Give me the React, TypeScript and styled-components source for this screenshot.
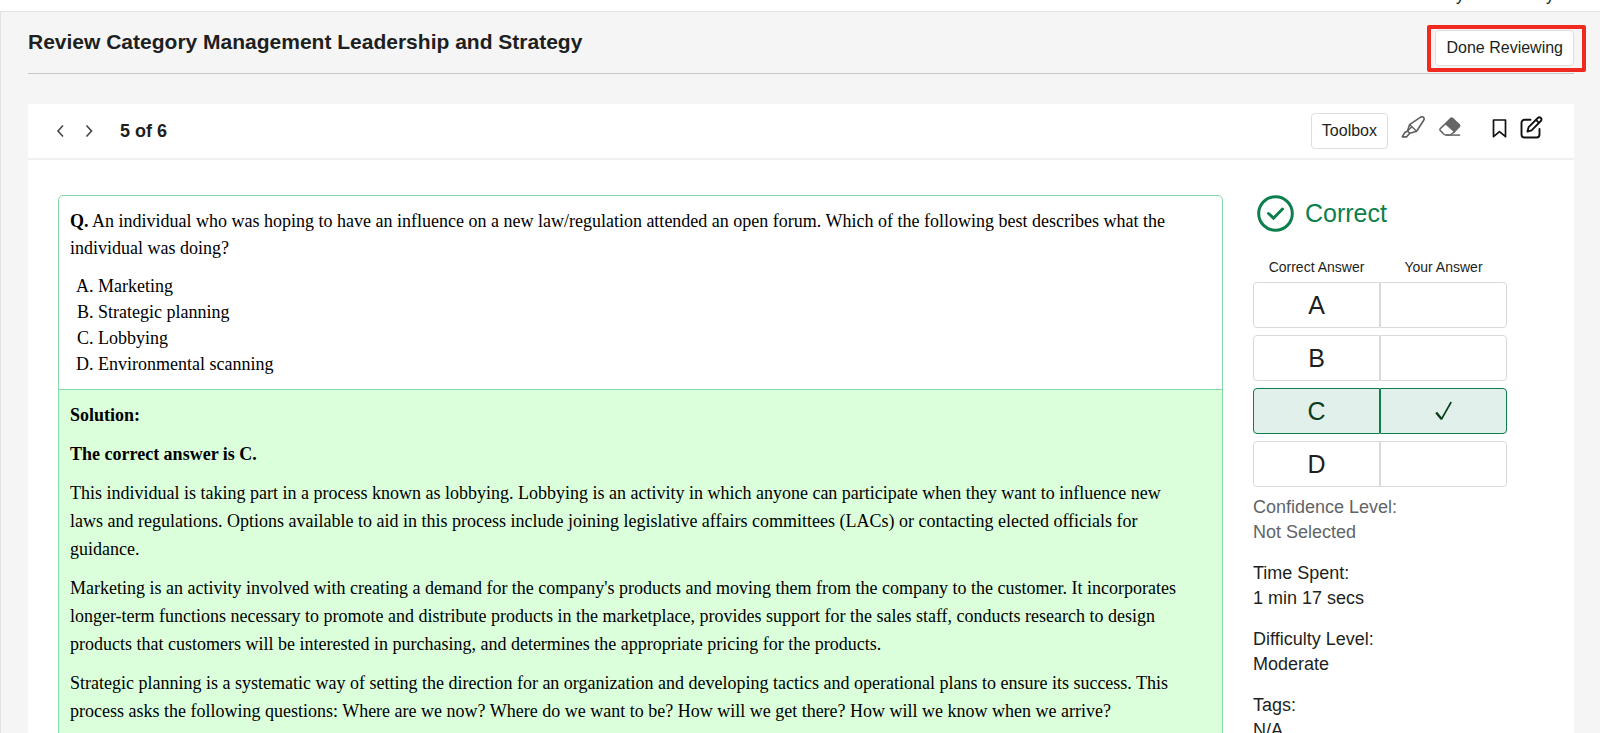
import React from "react";
import styled, { createGlobalStyle, css } from "styled-components";

const GlobalStyle = createGlobalStyle`
  *, *::before, *::after { box-sizing: border-box; }
  body {
    margin: 0;
    background: #f5f5f5;
    color: #1d1f21;
    font-family: "Liberation Sans", Arial, sans-serif;
    font-size: 16px;
  }
`;

const Shell = styled.div`
  display: flex;
  flex-direction: column;
  height: 100vh;
  overflow: hidden;
`;

const TopBar = styled.nav`
  display: flex;
  align-items: flex-end;
  justify-content: flex-end;
  gap: 82px;
  flex: none;
  height: 11px;
  padding-right: 46px;
  overflow: hidden;
  background: #fff;
  font-size: 16px;
  line-height: 30px;
`;

const Page = styled.main`
  flex: 1;
  padding: 18px 26px 0 27px;
  border-top: 1px solid #e2e2e2;
  border-left: 1px solid #e2e2e2;
  background: #f5f5f5;
`;

const PageHeader = styled.header`
  display: flex;
  justify-content: space-between;
  align-items: flex-start;
  height: 44px;
  border-bottom: 1px solid #c8c8c8;
`;

const Title = styled.h1`
  margin: 0;
  font-size: 21px;
  line-height: 24px;
`;

const Button = styled.button`
  height: 36px;
  padding: 0 10px;
  border: 1px solid #dedede;
  border-radius: 4px;
  background: #fff;
  color: #1d1f21;
  font: inherit;
  line-height: 24px;
`;

const Highlighted = styled.div`
  position: relative;
  &::after {
    content: "";
    position: absolute;
    inset: -5px -12px -6px -8px;
    border: 4px solid #f02a20;
    border-radius: 2px;
    pointer-events: none;
  }
`;

const Card = styled.section`
  margin-top: 30px;
  background: #fff;
`;

const Toolbar = styled.div`
  display: flex;
  align-items: center;
  height: 56px;
  padding: 0 29px 0 19px;
  border-bottom: 2px solid #f0f0f0;
`;

const IconButton = styled.button`
  display: flex;
  align-items: center;
  justify-content: center;
  width: 28px;
  height: 28px;
  padding: 0;
  border: 0;
  background: none;
  color: #444;
`;

const Counter = styled.h2`
  margin: 0 auto 0 17px;
  font-size: 18px;
  line-height: 24px;
`;

const Tools = styled.div<{ $gap: number; $before: number }>`
  display: flex;
  align-items: center;
  gap: ${(p) => p.$gap}px;
  margin-left: ${(p) => p.$before}px;
  padding-bottom: 8px;
`;

const Content = styled.div`
  display: flex;
  gap: 30px;
  padding: 35px 67px 0 30px;
`;

const Question = styled.article`
  flex: 1;
  min-width: 0;
  border: 1px solid #86d9a8;
  border-radius: 5px;
  overflow: hidden;
  color: #000;
  font-family: "Liberation Serif", "Times New Roman", serif;
  font-size: 18px;
  line-height: 27px;
  p { margin: 0 0 11px; }
`;

const Prompt = styled.div`
  padding: 12px 36px 12px 11px;
`;

const Choices = styled.ol`
  margin: 0;
  padding-left: 28px;
  line-height: 26px;
  list-style: upper-alpha;
`;

const Solution = styled.div`
  padding: 11px 36px 12px 11px;
  border-top: 1px solid #86d9a8;
  background: #dbffdb;
  line-height: 28px;
`;

const Side = styled.aside`
  flex: none;
  width: 254px;
  font-size: 18px;
  line-height: 25px;
`;

const Result = styled.div`
  display: flex;
  align-items: center;
  gap: 11px;
  padding-left: 4px;
  color: #0c7f4c;
  font-size: 25px;
  line-height: 37px;
`;

const Answers = styled.table`
  width: 100%;
  margin-top: 21px;
  table-layout: fixed;
  border-collapse: separate;
  border-spacing: 0 7px;
`;

const HeadCell = styled.th`
  height: 15px;
  padding: 0;
  font-size: 14px;
  font-weight: 400;
  line-height: 15px;
`;

const AnswerCell = styled.td<{ $correct: boolean }>`
  height: 46px;
  padding: 0;
  border: 1px solid #d9d9d9;
  font-size: 25px;
  line-height: 28px;
  text-align: center;
  &:first-child { border-radius: 4px 0 0 4px; }
  &:last-child { border-radius: 0 4px 4px 0; }
  svg { display: block; margin: auto; }
  ${(p) =>
    p.$correct &&
    css`
      border-color: #0c7f4c;
      background: #e1f0ea;
      color: #0b3d1c;
    `}
`;

const Facts = styled.dl`
  display: flex;
  flex-direction: column;
  gap: 16px;
  margin: 1px 0 0;
`;

const Fact = styled.div<{ $muted?: boolean }>`
  color: ${(p) => (p.$muted ? "#616467" : "#1d1f21")};
  dd { margin: 0; }
`;

const Chevron = ({ d }: { d: string }) => (
  <svg width="16" height="16" viewBox="0 0 16 16" fill="none" stroke="currentColor" strokeWidth="1.6">
    <path d={d} />
  </svg>
);

const HighlighterIcon = () => (
  <svg width="24" height="22" viewBox="0 0 24 22" fill="none" stroke="#5f5f5f" strokeWidth="1.6" strokeLinejoin="round">
    <path d="M8.600 8.600 19.600 1.200c1.200-.7 2.200-.5 2.900.2s.9 1.700.2 2.800L15.600 15.200 8.800 17.300 6.500 15Z" />
    <path d="m8.600 8.600 7 6.600M6.500 15l4.300-4.200" strokeWidth="1.400" />
    <path d="M6.500 15 3.600 16.800 1.200 20.900h4.300l3.300-3.600" />
  </svg>
);

const EraserIcon = () => (
  <svg width="22" height="20" viewBox="0 0 22 20" fill="none" stroke="#666" strokeWidth="1.5" strokeLinejoin="round">
    <path d="M11.600 1.400a1.400 1.400 0 0 1 1.900 0l6.800 6.400a1.400 1.400 0 0 1 0 2l-4.700 4.800-9-8Z" fill="#666" />
    <path d="M6.600 6.600 1.300 11.600a1.400 1.400 0 0 0 0 2l3.700 3.600a3 3 0 0 0 2 .8h4.300l4.300-3.400" />
    <path d="M7 18.100h14.200" />
  </svg>
);

const BookmarkIcon = () => (
  <svg width="15" height="21" viewBox="0 -2 15 21" fill="none" stroke="#111" strokeWidth="1.700" strokeLinejoin="round">
    <path d="M1.500 1h12v16.700l-6-5-6 5Z" />
  </svg>
);

const NoteIcon = () => (
  <svg width="23" height="23" viewBox="0 0 23 23" fill="none" stroke="#111" strokeWidth="1.900" strokeLinejoin="round" strokeLinecap="round">
    <path d="M10.500 3.700H4.500A3 3 0 0 0 1.500 6.700V18.500a3 3 0 0 0 3 3H16.500a3 3 0 0 0 3-3V13" />
    <path d="M7.400 15.600 8.600 11.200 17.800 2a2.100 2.100 0 0 1 3 3L11.600 14.300ZM16 3.900l3 3" strokeWidth="1.800" />
  </svg>
);

const choices = ["Marketing", "Strategic planning", "Lobbying", "Environmental scanning"];

const facts = [
  { label: "Confidence Level:", value: "Not Selected", muted: true },
  { label: "Time Spent:", value: "1 min 17 secs" },
  { label: "Difficulty Level:", value: "Moderate" },
  { label: "Tags:", value: "N/A" },
];

export default function App() {
  return (
    <Shell>
      <GlobalStyle />
      <TopBar>
        <span>y</span>
        <span>y</span>
      </TopBar>
      <Page>
        <PageHeader>
          <Title>Review Category Management Leadership and Strategy</Title>
          <Highlighted>
            <Button type="button">Done Reviewing</Button>
          </Highlighted>
        </PageHeader>
        <Card>
          <Toolbar>
            <IconButton type="button" aria-label="Previous question">
              <Chevron d="M10 2.500 5 8l5 5.500" />
            </IconButton>
            <IconButton type="button" aria-label="Next question">
              <Chevron d="m5.500 2.500 5 5.500-5 5.500" />
            </IconButton>
            <Counter>5 of 6</Counter>
            <Button type="button">Toolbox</Button>
            <Tools $gap={9} $before={11}>
              <IconButton type="button" aria-label="Highlight"><HighlighterIcon /></IconButton>
              <IconButton type="button" aria-label="Erase highlight"><EraserIcon /></IconButton>
            </Tools>
            <Tools $gap={4} $before={21}>
              <IconButton type="button" aria-label="Bookmark"><BookmarkIcon /></IconButton>
              <IconButton type="button" aria-label="Add note"><NoteIcon /></IconButton>
            </Tools>
          </Toolbar>
          <Content>
            <Question>
              <Prompt>
                <p>
                  <b>Q.</b> An individual who was hoping to have an influence on a new law/regulation attended an
                  open forum. Which of the following best describes what the individual was doing?
                </p>
                <Choices>
                  {choices.map((c) => (
                    <li key={c}>{c}</li>
                  ))}
                </Choices>
              </Prompt>
              <Solution>
                <p><b>Solution:</b></p>
                <p><b>The correct answer is C.</b></p>
                <p>
                  This individual is taking part in a process known as lobbying. Lobbying is an activity in which
                  anyone can participate when they want to influence new laws and regulations. Options available to
                  aid in this process include joining legislative affairs committees (LACs) or contacting elected
                  officials for guidance.
                </p>
                <p>
                  Marketing is an activity involved with creating a demand for the company's products and moving
                  them from the company to the customer. It incorporates longer-term functions necessary to promote
                  and distribute products in the marketplace, provides support for the sales staff, conducts
                  research to design products that customers will be interested in purchasing, and determines the
                  appropriate pricing for the products.
                </p>
                <p>
                  Strategic planning is a systematic way of setting the direction for an organization and developing
                  tactics and operational plans to ensure its success. This process asks the following questions:
                  Where are we now? Where do we want to be? How will we get there? How will we know when we arrive?
                </p>
              </Solution>
            </Question>
            <Side>
              <Result>
                <svg width="37" height="37" viewBox="0 0 37 37" fill="none" stroke="currentColor" strokeWidth="3">
                  <circle cx="18.500" cy="18.500" r="16.800" />
                  <path d="m11.500 18.500 5 4.700 9-9.200" strokeLinecap="round" />
                </svg>
                Correct
              </Result>
              <Answers>
                <thead>
                  <tr>
                    <HeadCell scope="col">Correct Answer</HeadCell>
                    <HeadCell scope="col">Your Answer</HeadCell>
                  </tr>
                </thead>
                <tbody>
                  {["A", "B", "C", "D"].map((letter) => (
                    <tr key={letter}>
                      <AnswerCell $correct={letter === "C"}>{letter}</AnswerCell>
                      <AnswerCell $correct={letter === "C"}>
                        {letter === "C" && (
                          <svg width="18" height="20" viewBox="0 0 18 20" fill="none" stroke="currentColor" role="img" aria-label="Selected">
                            <path d="M1.200 11.500 6.500 18" strokeWidth="2.400" />
                            <path d="M6.300 18.500 16.200 1" strokeWidth="1.600" />
                          </svg>
                        )}
                      </AnswerCell>
                    </tr>
                  ))}
                </tbody>
              </Answers>
              <Facts>
                {facts.map((f) => (
                  <Fact key={f.label} $muted={f.muted}>
                    <dt>{f.label}</dt>
                    <dd>{f.value}</dd>
                  </Fact>
                ))}
              </Facts>
            </Side>
          </Content>
        </Card>
      </Page>
    </Shell>
  );
}
